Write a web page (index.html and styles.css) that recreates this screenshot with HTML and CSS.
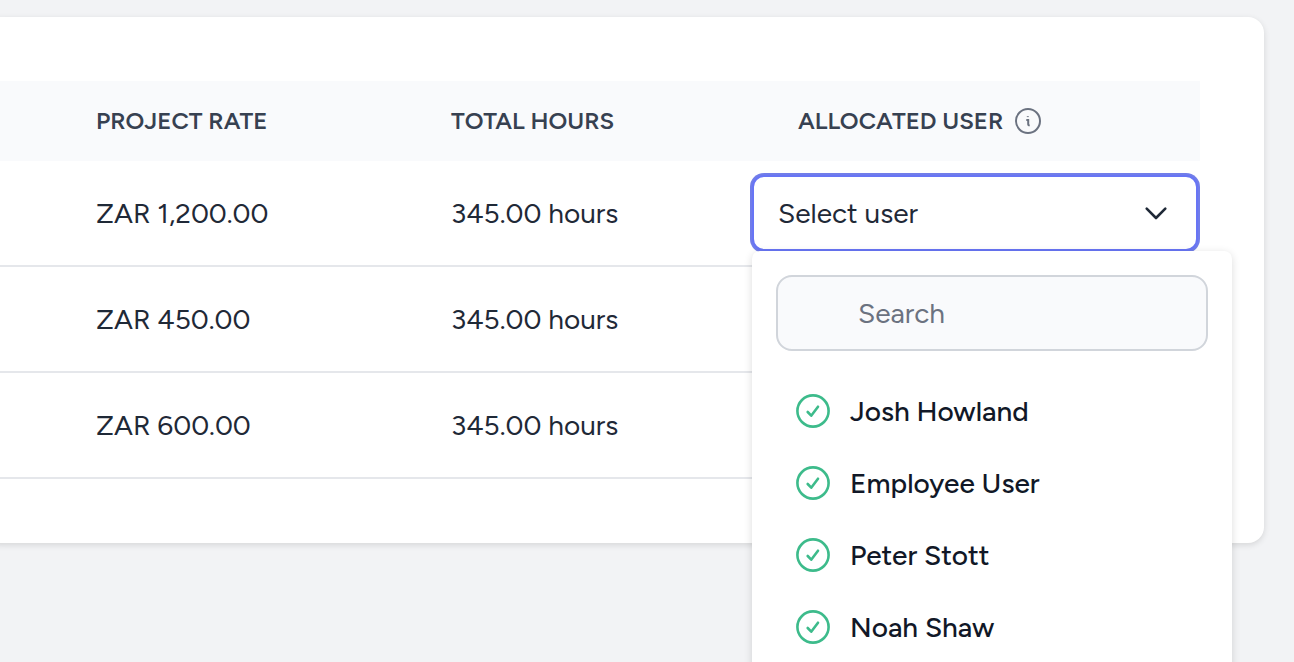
FILE: index.html
```html
<!DOCTYPE html>
<html lang="en">
<head>
  <meta charset="UTF-8">
  <title>Project allocation</title>
  <link rel="stylesheet" href="styles.css">
</head>
<body>
<svg class="sprite" aria-hidden="true">
  <symbol id="check" viewBox="0 0 34 34">
    <circle cx="17" cy="17" r="15.6"></circle>
    <path d="M11.7 18l3.5 3.7 6.8-9"></path>
  </symbol>
</svg>
<main class="card">
  <table class="rates">
    <colgroup>
      <col class="col-rate">
      <col>
      <col class="col-user">
    </colgroup>
    <thead>
      <tr>
        <th>Project rate</th>
        <th>Total hours</th>
        <th>
          <div class="th-info">
            <span id="user-label">Allocated user</span>
            <svg class="info" viewBox="0 0 26 26" aria-hidden="true">
              <circle cx="13" cy="13" r="12"></circle>
              <path d="M11.3 11.9h1.9v4.3q0 1.2 1.5 1"></path>
              <path d="M12.8 8.2v.9"></path>
            </svg>
          </div>
        </th>
      </tr>
    </thead>
    <tbody>
      <tr>
        <td>ZAR 1,200.00</td>
        <td>345.00 hours</td>
        <td class="user-cell">
          <div class="dropdown">
            <button type="button" class="toggle" aria-haspopup="true" aria-expanded="true" aria-describedby="user-label">
              Select user
              <svg class="chevron" viewBox="0 0 24 14" aria-hidden="true"><path d="M2.7 2.7l9.3 9.3 9.3-9.3"></path></svg>
            </button>
            <div class="menu">
              <input class="search" type="search" placeholder="Search" aria-label="Search users">
              <ul class="users">
                <li><button type="button" class="user"><svg class="check"><use href="#check"></use></svg>Josh Howland</button></li>
                <li><button type="button" class="user"><svg class="check"><use href="#check"></use></svg>Employee User</button></li>
                <li><button type="button" class="user"><svg class="check"><use href="#check"></use></svg>Peter Stott</button></li>
                <li><button type="button" class="user"><svg class="check"><use href="#check"></use></svg>Noah Shaw</button></li>
              </ul>
            </div>
          </div>
        </td>
      </tr>
      <tr>
        <td>ZAR 450.00</td>
        <td>345.00 hours</td>
        <td></td>
      </tr>
      <tr>
        <td>ZAR 600.00</td>
        <td>345.00 hours</td>
        <td></td>
      </tr>
    </tbody>
  </table>
</main>
</body>
</html>
```
FILE: styles.css
```css
* {
  box-sizing: border-box;
}

body {
  margin: 0;
  padding: 17px 30px 0 0;
  height: 100vh;
  overflow: hidden;
  background-color: #f2f3f5;
  color: #1f2937;
  font-family: Figtree, Lato, sans-serif;
  font-size: 28px;
  line-height: 40px;
}

button, input {
  font: inherit;
  color: inherit;
}

.sprite {
  position: absolute;
  width: 0;
  height: 0;
}

/* runs off the left side of the window */
.card {
  margin-left: -16px;
  padding: 64px 64px 64px 16px;
  background-color: #fff;
  border-radius: 16px;
  box-shadow: 0 2px 6px rgba(0, 0, 0, 0.12);
}

/* table */
.rates {
  width: 100%;
  table-layout: fixed;
  border-collapse: separate;
  border-spacing: 0;
}

.col-rate {
  width: 403px;
}

.col-user {
  width: 450px;
}

.rates th {
  height: 80px;
  padding: 0 0 0 48px;
  background-color: #f9fafc;
  color: #374151;
  font-size: 24px;
  font-weight: 600;
  text-align: left;
  text-transform: uppercase;
}

.rates td {
  height: 106px;
  padding: 0 0 0 48px;
  border-bottom: 2px solid #e5e7eb;
}

.rates th:first-child,
.rates td:first-child {
  padding-left: 96px;
}

.rates .user-cell {
  padding: 0 2px;
}

.th-info {
  display: flex;
  align-items: center;
  gap: 12px;
}

.info {
  width: 26px;
  height: 26px;
  fill: none;
  stroke: #6b7280;
  stroke-width: 2;
}

/* user dropdown */
.dropdown {
  position: relative;
}

.toggle {
  display: flex;
  align-items: center;
  justify-content: space-between;
  width: 100%;
  height: 76px;
  padding: 0 28px 0 24px;
  background-color: #fff;
  border: 2px solid #6875f5;
  border-radius: 12px;
  box-shadow: 0 0 0 2px #717de9;
}

.chevron {
  width: 24px;
  height: 14px;
  fill: none;
  stroke: #1f2937;
  stroke-width: 2.6;
  stroke-linecap: round;
  stroke-linejoin: round;
}

.menu {
  position: absolute;
  top: 100%;
  left: 0;
  width: 480px;
  padding: 24px;
  background-color: #fff;
  border-radius: 8px;
  box-shadow: 0 2px 8px rgba(0, 0, 0, 0.14);
}

.search {
  display: block;
  width: 100%;
  height: 76px;
  padding: 0 24px 0 80px;
  background-color: #f9fafc;
  border: 2px solid #d1d5db;
  border-radius: 16px;
  appearance: none;
}

.search::placeholder {
  color: #6b7280;
  opacity: 1;
}

.users {
  margin: 24px 0 0;
  padding: 0;
  list-style: none;
}

.user {
  display: flex;
  align-items: center;
  gap: 20px;
  width: 100%;
  height: 72px;
  padding: 0 20px;
  background: none;
  border: 0;
  color: #111827;
  font-weight: 500;
}

.check {
  width: 34px;
  height: 34px;
  fill: none;
  stroke: #3dbb8b;
  stroke-width: 2.6;
  stroke-linecap: round;
  stroke-linejoin: round;
}
```
